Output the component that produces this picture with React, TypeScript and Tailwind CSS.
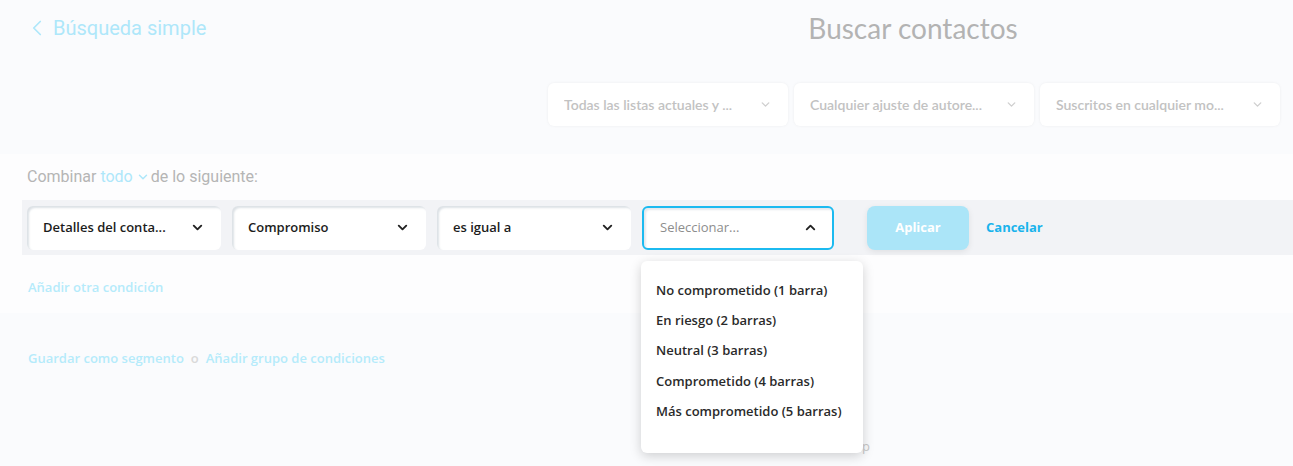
import { ChevronDown, ChevronUp, ChevronLeft } from 'lucide-react';

const sans = { fontFamily: '"Open Sans", Lato, sans-serif' };
const roboto = { fontFamily: 'Roboto, sans-serif' };

// filtro deshabilitado de arriba
function TopFilter({ label }: { label: string }) {
  return (
    <div className="w-[240px] h-[43px] bg-white rounded-md shadow-[0_0_3px_rgba(0,0,0,0.06)] flex items-center justify-between pl-4 pr-4">
      <span className="text-[14px] text-[#c2c2c2] font-semibold truncate" style={{ fontFamily: 'Lato, sans-serif' }}>{label}</span>
      <ChevronDown size={13} className="text-[#cfcfcf]" strokeWidth={2.5} />
    </div>
  );
}

function CondSelect({ label }: { label: string }) {
  return (
    <div className="w-[194px] h-[44px] bg-white rounded-md shadow-[inset_2px_2px_2px_rgba(180,190,200,0.45)] flex items-center justify-between pl-4 pr-4">
      <span className="text-[13px] font-semibold text-[#1c1c1c]">{label}</span>
      <ChevronDown size={15} className="text-[#222]" strokeWidth={3} />
    </div>
  );
}

const options = [
  'No comprometido (1 barra)',
  'En riesgo (2 barras)',
  'Neutral (3 barras)',
  'Comprometido (4 barras)',
  'Más comprometido (5 barras)',
];

export default function App() {
  return (
    <div className="w-[1293px] h-[466px] overflow-hidden bg-[#fafbfd] relative" style={sans}>
      {/* cabecera */}
      <div className="flex items-center h-[56px]">
        <div className="w-[533px] pl-[24px] flex items-center gap-[3px] text-[#aee7fa]" style={roboto}>
          <ChevronLeft size={26} strokeWidth={1.6} />
          <span className="text-[20px]">Búsqueda simple</span>
        </div>
        <div className="flex-1 text-center text-[28px] text-[#b3b3b3]" style={{ fontFamily: 'Lato, sans-serif' }}>Buscar contactos</div>
      </div>

      {/* filtros */}
      <div className="flex justify-end gap-[6px] pr-[13px] mt-[27px]">
        <TopFilter label="Todas las listas actuales y ..." />
        <TopFilter label="Cualquier ajuste de autore..." />
        <TopFilter label="Suscritos en cualquier mo..." />
      </div>

      <div className="mt-[28px] bg-[#fdfdfe]">
        <div className="pt-[14px] leading-[18px] flex items-center pl-[27px] text-[16px] text-[#b5b5b5]" style={roboto}>
          <span>Combinar&nbsp;</span>
          <span className="text-[#aee7fa] flex items-center">
            todo
            <ChevronDown size={14} strokeWidth={2.5} className="ml-[3px] mr-[1px]" />
          </span>
          <span>de lo siguiente:</span>
        </div>

        {/* fila de condición */}
        <div className="ml-[22px] mt-[14px] h-[55px] bg-[#f2f3f6] flex items-center pl-[5px] gap-[11px]">
          <CondSelect label="Detalles del conta..." />
          <CondSelect label="Compromiso" />
          <CondSelect label="es igual a" />
          <div className="relative">
            <div className="w-[192px] h-[44px] bg-white rounded-md border-2 border-[#1cbaf0] shadow-[inset_2px_2px_2px_rgba(180,190,200,0.35)] flex items-center justify-between pl-4 pr-[14px]">
              <span className="text-[13px] text-[#8d8d8d]">Seleccionar...</span>
              <ChevronUp size={15} className="text-[#222]" strokeWidth={3} />
            </div>
            <div className="absolute left-[-1px] top-[55px] w-[222px] h-[192px] bg-white rounded-md shadow-[0_3px_12px_rgba(0,0,0,0.18)] z-10 pt-[15px] pl-[15px]">
              {options.map((o) => (
                <div key={o} className="h-[30.3px] flex items-center text-[13px] font-semibold text-[#2a2a2a]">
                  {o}
                </div>
              ))}
            </div>
          </div>
          <button className="ml-[22px] w-[102px] h-[44px] rounded-lg bg-[#abe5f8] text-white text-[13px] font-bold shadow-[0_2px_6px_rgba(0,0,0,0.08)]">
            Aplicar
          </button>
          <span className="ml-[6px] text-[13px] font-bold text-[#1ab3ec]">Cancelar</span>
        </div>

        <div className="h-[58px] pt-[23px] leading-[18px] pl-[28px] text-[13px] font-semibold text-[#b5ebfb]">
          Añadir otra condición
        </div>
      </div>

      <div className="pt-[36px] leading-[18px] flex items-center pl-[28px] text-[13px] font-semibold text-[#b5ebfb] gap-[7px]">
        <span>Guardar como segmento</span>
        <span className="text-[#d9d9d9]">o</span>
        <span>Añadir grupo de condiciones</span>
      </div>

      <div className="absolute left-[862px] top-[437px] text-[13px] text-[#c8c8c8]">p</div>
    </div>
  );
}
